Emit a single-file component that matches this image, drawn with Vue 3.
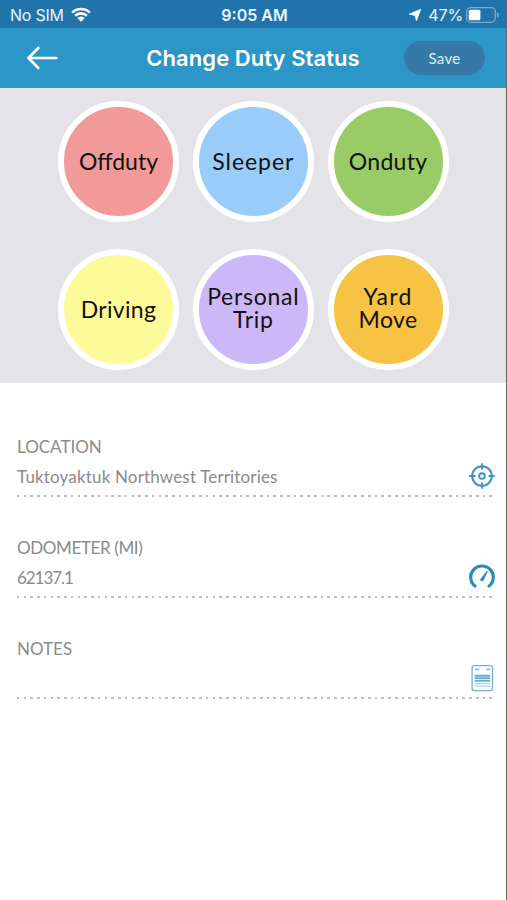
<script setup>
const duties = [
  { key: 'offduty', lines: ['Offduty'] },
  { key: 'sleeper', lines: ['Sleeper'] },
  { key: 'onduty', lines: ['Onduty'] },
  { key: 'driving', lines: ['Driving'] },
  { key: 'personal', lines: ['Personal', 'Trip'] },
  { key: 'yard', lines: ['Yard', 'Move'] },
]
const fields = [
  { key: 'location', label: 'LOCATION', value: 'Tuktoyaktuk Northwest Territories' },
  { key: 'odometer', label: 'ODOMETER (MI)', value: '62137.1' },
  { key: 'notes', label: 'NOTES', value: '' },
]
</script>

<template>
  <div class="screen">
    <div class="status">
      <div class="side">
        <span class="carrier">No SIM</span>
        <svg class="wifi" width="20" height="15" viewBox="0 0 20 15">
          <path d="M1.2 5.6a12.5 12.5 0 0 1 17.6 0M4.2 8.8a8.2 8.2 0 0 1 11.6 0" fill="none" stroke="#fff" stroke-width="2.7" />
          <path d="M6.3 11a5.2 5.2 0 0 1 7.4 0L10 14.8z" fill="#fff" />
        </svg>
      </div>
      <span class="clock">9:05 AM</span>
      <div class="side right">
        <svg class="nav-arrow" width="12" height="12" viewBox="0 0 12 12">
          <path d="M12 0 7.4 12 6 6.4 0 5.2z" fill="#fff" stroke="#fff" stroke-width=".6" />
        </svg>
        <span class="percent">47%</span>
        <svg class="battery" width="33" height="16" viewBox="0 0 33 16">
          <rect x=".7" y=".7" width="28.6" height="14.6" rx="4" fill="none" stroke="#78add2" stroke-width="1.3" />
          <rect x="2.8" y="2.8" width="11.6" height="10.4" rx="1.5" fill="#fff" />
          <path d="M31 5.2a3 3 0 0 1 0 5.6z" fill="#78add2" />
        </svg>
      </div>
    </div>

    <header class="bar">
      <svg class="back" width="32" height="24" viewBox="0 0 32 24">
        <path d="M12.3 2 2.4 12l9.9 10M2.8 12h27.6" fill="none" stroke="#fff" stroke-width="2.6" stroke-linecap="round" stroke-linejoin="round" />
      </svg>
      <h1>Change Duty Status</h1>
      <button class="save"><span>Save</span></button>
    </header>

    <section class="duties">
      <button v-for="d in duties" :key="d.key" class="duty" :class="[d.key, { double: d.lines.length > 1 }]">
        <span v-for="l in d.lines" :key="l">{{ l }}</span>
      </button>
    </section>

    <section class="form">
      <div v-for="f in fields" :key="f.key" class="field" :class="f.key">
        <div class="label"><span>{{ f.label }}</span></div>
        <div class="row">
          <span class="value">{{ f.value }}</span>
          <svg v-if="f.key === 'location'" width="26" height="26" viewBox="0 0 26 26" fill="none" stroke="#3a96bf">
            <circle cx="13" cy="13" r="9.8" stroke-width="2" />
            <circle cx="13" cy="13" r="2.8" stroke-width="1.9" />
            <path d="M13 .2v6.3M13 19.5v6.3M.2 13h6.3M19.5 13h6.3" stroke-width="1.8" />
          </svg>
          <svg v-else-if="f.key === 'odometer'" width="26" height="26" viewBox="0 0 26 26" fill="none" stroke="#2b8bb9">
            <path d="M5.9 22.1A11.3 11.3 0 1 1 20.1 22.1" stroke-width="3.2" stroke-linecap="round" />
            <path d="M12.1 15.4 18 7.6 13.8 16.2z" fill="#2b8bb9" stroke-width="1.3" stroke-linejoin="round" />
            <circle cx="12.9" cy="15.7" r="1.5" fill="#2b8bb9" stroke="none" />
          </svg>
          <svg v-else width="26" height="28" viewBox="0 0 26 28" fill="none">
            <rect x="3.1" y="1.6" width="20.4" height="25" rx="2" stroke="#74b1c9" stroke-width="1.3" />
            <path d="M6 5.4h4.4M17 5.4h4.4" stroke="#8abfd5" stroke-width="1.7" />
            <path d="M5.6 11.7h15.6M5.6 14.3h15.6M5.6 16.9h15.6" stroke="#60afd6" stroke-width="1.9" />
            <path d="M5.6 19.6h15.6M5.6 22.1h15.6" stroke="#a6d2e7" stroke-width="1.2" />
          </svg>
        </div>
        <div class="dots"></div>
      </div>
    </section>
  </div>
</template>

<style>
body { margin: 0; background: #fefefe; }
</style>

<style scoped>
* { box-sizing: border-box; }
.screen {
  width: 507px;
  height: 900px;
  background: #fefefe;
  border-right: 1px solid #66686b;
  font-family: Lato, sans-serif;
  overflow: hidden;
}
button { border: 0; padding: 0; font-family: inherit; }
span, h1 { white-space: nowrap; }
.status {
  height: 28px;
  background: #2074ab;
  color: #e9f4fb;
  font: 400 16px/26px Inter, sans-serif;
  display: grid;
  grid-template-columns: 1fr auto 1fr;
  align-items: center;
  padding: 1px 7px 0 10px;
}
.side { display: flex; align-items: center; }
.right { justify-content: flex-end; }
.carrier { letter-spacing: -.25px; }
.wifi { margin-left: 7px; }
.clock { font-weight: 600; }
.nav-arrow { margin-right: 7px; }
.percent { letter-spacing: -.1px; }
.battery { margin-left: 3px; }
.bar {
  height: 60px;
  background: #2c96c7;
  display: grid;
  grid-template-columns: 120px 1fr 120px;
  align-items: center;
  justify-items: center;
}
.back { justify-self: start; margin-left: 26px; }
h1 {
  margin: 0;
  color: #fff;
  font: 600 22px/30px Inter, sans-serif;
  letter-spacing: .06px;
}
.save {
  width: 81px;
  height: 34px;
  border-radius: 17px;
  background: #3679a8;
  color: #e0edf5;
  font-size: 15px;
  letter-spacing: .3px;
  justify-self: end;
  margin-right: 21px;
}
.duties {
  height: 295px;
  background: #e4e3e8;
  padding: 13px 57px 0 58px;
  display: grid;
  grid-template-columns: repeat(3, 121px);
  grid-auto-rows: 121px;
  gap: 27px 13.8px;
}
.duty {
  border: 6.5px solid #fff;
  border-radius: 50%;
  color: #15110f;
  font-size: 23px;
  line-height: 23px;
  display: flex;
  flex-direction: column;
  align-items: center;
  justify-content: center;
}
.double { padding-bottom: 3px; }
.offduty { background: #f29999; }
.sleeper { background: #99ccf9; letter-spacing: .95px; }
.onduty { background: #99cc66; letter-spacing: .3px; }
.driving { background: #fdfb99; letter-spacing: .3px; }
.personal { background: #ccb8f8; letter-spacing: .75px; }
.yard { background: #f6c344; letter-spacing: .4px; }
.yard span:first-child { letter-spacing: 1.3px; }
.form { padding: 54px 11px 0 17px; color: #8b8b8b; }
.field { height: 101px; }
.label { font-size: 17px; line-height: 20px; }
.odometer .label { letter-spacing: -.37px; }
.odometer .value { letter-spacing: -1.05px; }
.location .value { letter-spacing: .16px; }
.row {
  height: 38px;
  display: flex;
  align-items: center;
  justify-content: space-between;
  font-size: 17px;
}
.dots {
  width: 476px;
  height: 2px;
  background: repeating-linear-gradient(90deg, #bdbdbd 0 2.5px, transparent 2.5px 6.75px);
}
</style>
